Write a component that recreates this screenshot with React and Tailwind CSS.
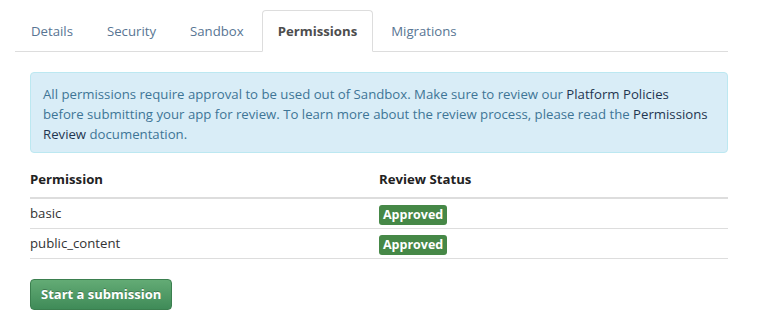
import React from "react";

const tabs = ["Details", "Security", "Sandbox", "Permissions", "Migrations"];

export default function App() {
  return (
    <div
      className="bg-white w-[768px] h-[332px] text-[13.2px] leading-[20px] text-[#333]"
      style={{ fontFamily: '"Open Sans", "Noto Sans", Arial, sans-serif' }}
    >
      <div className="pt-[10px] px-[15px] w-[743px]">
        <ul className="flex border-b border-[#dddddd]">
          {tabs.map((t) => {
            const active = t === "Permissions";
            return (
              <li key={t} className="mr-[2px] -mb-px">
                <div
                  className={
                    active
                      ? "px-[15px] h-[42px] flex items-center border border-[#dddddd] border-b-white rounded-t-[4px] bg-white font-bold text-[#4d4d4d]"
                      : "px-[15px] h-[42px] flex items-center border border-transparent text-[#587593]"
                  }
                >
                  {t}
                </div>
              </li>
            );
          })}
        </ul>
      </div>
      <div className="px-[30px] w-[758px]">
        <div className="mt-[20px] border border-[#bce8f1] bg-[#d9edf7] rounded-[4px] text-[#3e7596] pl-[12px] pr-[6px] pt-[11px] pb-[8px]">
          All permissions require approval to be used out of Sandbox. Make sure to review our{" "}
          <span className="text-[#1f3550]">Platform Policies</span>
          <br />
          before submitting your app for review. To learn more about the review process, please read the{" "}
          <span className="text-[#1f3550]">Permissions</span>
          <br />
          <span className="text-[#1f3550]">Review</span> documentation.
        </div>
        <table className="w-full mt-[15px] border-collapse table-fixed">
          <thead>
            <tr className="border-b-2 border-[#dddddd]">
              <th className="text-left font-bold text-[#222] h-[30px] align-top w-1/2 p-0 pt-[1px]">Permission</th>
              <th className="text-left font-bold text-[#222] h-[30px] align-top p-0 pt-[1px]">Review Status</th>
            </tr>
          </thead>
          <tbody>
            {["basic", "public_content"].map((p) => (
              <tr key={p} className="border-b border-[#dddddd]">
                <td className="h-[30px] align-middle text-[#333] p-0">{p}</td>
                <td className="align-middle p-0">
                  <span className="inline-flex items-center h-[20px] px-[4px] mt-[3px] rounded-[3px] bg-[#468847] text-white font-bold text-[12.5px] leading-[20px]">
                    Approved
                  </span>
                </td>
              </tr>
            ))}
          </tbody>
        </table>
        <button
          className="mt-[20px] h-[31px] px-[10px] rounded-[4px] border border-[#3b7f4f] bg-gradient-to-b from-[#63ab75] to-[#3f8b58] text-white font-bold text-[13px]"
          style={{ textShadow: "0 -1px 0 rgba(0,0,0,0.25)" }}
        >
          Start a submission
        </button>
      </div>
    </div>
  );
}
